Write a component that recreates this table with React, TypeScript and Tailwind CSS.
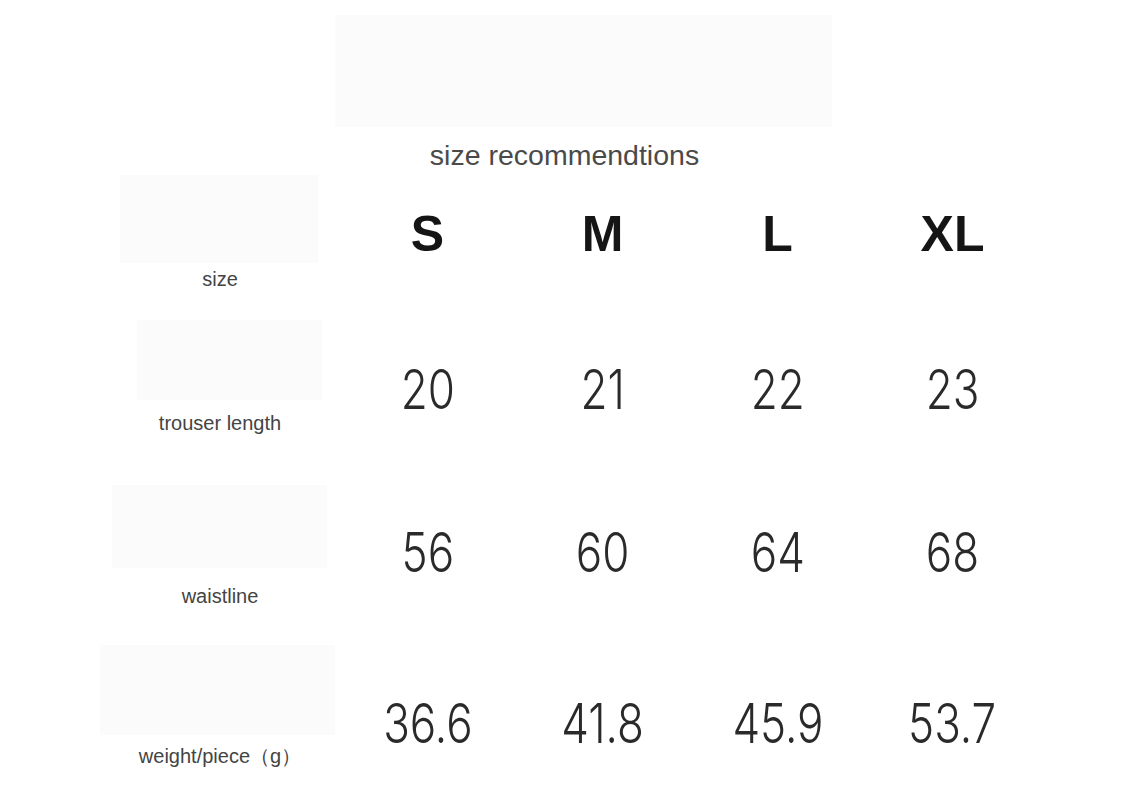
const sizes = ["S", "M", "L", "XL"];

const rows = [
  {
    label: "trouser length",
    values: ["20", "21", "22", "23"],
    h: "h-[165px]",
    box: "mt-[20px] ml-[37px] w-[185px] h-[80px]",
    labelGap: "mt-[11px]",
    valuePad: "pt-[59px]",
  },
  {
    label: "waistline",
    values: ["56", "60", "64", "68"],
    h: "h-[160px]",
    box: "mt-[20px] ml-[12px] w-[215px] h-[83px]",
    labelGap: "mt-[16px]",
    valuePad: "pt-[57px]",
  },
  {
    label: "weight/piece（g）",
    values: ["36.6", "41.8", "45.9", "53.7"],
    h: "h-[175px]",
    box: "mt-[20px] ml-[0px] w-[235px] h-[90px]",
    labelGap: "mt-[9px]",
    valuePad: "pt-[68px]",
  },
];

const labelFont = "font-['Liberation_Sans',Arial,sans-serif]";

export default function App() {
  return (
    <div className="w-[1129px] h-[800px] bg-white overflow-hidden relative">
      <div className="pt-[15px]">
        <div className="ml-[335px] w-[497px] h-[112px] bg-[#fbfbfb]" />
        <h1
          className={`mt-[13px] text-center text-[28.5px] leading-[30px] text-[#4a4a4a] ${labelFont}`}
        >
          size recommendtions
        </h1>
      </div>

      {/* header row */}
      <div className="grid grid-cols-[240px_repeat(4,175px)] pl-[100px] h-[130px]">
        <div className="flex flex-col">
          <div className="mt-[5px] ml-[20px] w-[198px] h-[88px] bg-[#fbfbfb]" />
          <div className={`mt-[4px] text-center text-[20px] leading-[24px] text-[#444] ${labelFont}`}>
            size
          </div>
        </div>
        {sizes.map((s) => (
          <div
            key={s}
            className={`pt-[34px] text-center text-[50px] leading-[60px] font-bold text-[#151515] ${labelFont}`}
          >
            {s}
          </div>
        ))}
      </div>

      {rows.map((r) => (
        <div
          key={r.label}
          className={`grid grid-cols-[240px_repeat(4,175px)] pl-[100px] ${r.h}`}
        >
          <div className="flex flex-col">
            <div className={`${r.box} bg-[#fbfbfb]`} />
            <div
              className={`${r.labelGap} text-center text-[20px] leading-[24px] text-[#444] ${labelFont}`}
            >
              {r.label}
            </div>
          </div>
          {r.values.map((v) => (
            <div key={v} className={`${r.valuePad} text-center`}>
              <span
                className="inline-block scale-x-[0.8] text-[55px] leading-[60px] font-light text-[#2a2a2a] font-['Inter',sans-serif]"
              >
                {v}
              </span>
            </div>
          ))}
        </div>
      ))}
    </div>
  );
}
